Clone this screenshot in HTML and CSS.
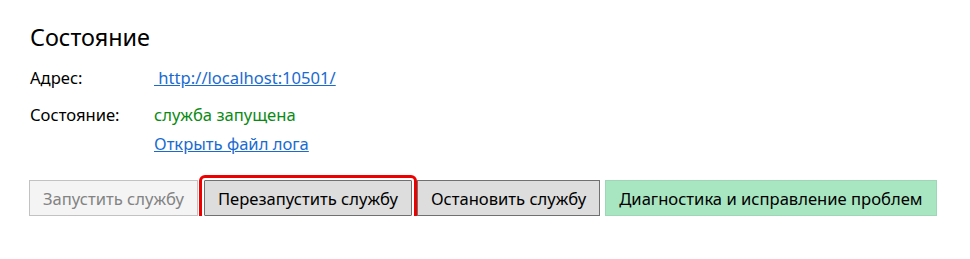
FILE: index.html
```html
<!DOCTYPE html>
<html lang="ru">
<head>
  <meta charset="UTF-8">
  <title>Состояние</title>
  <link rel="stylesheet" href="styles.css">
</head>
<body>
  <div class="panel">
    <h2 class="panel-title">Состояние</h2>
    <div class="info">
      <div class="info-label">Адрес:</div>
      <div class="info-value"><a class="link" href="#">&nbsp;http://localhost:10501/</a></div>
      <div class="info-label state-label">Состояние:</div>
      <div class="info-value state-label status-ok">служба запущена</div>
      <div></div>
      <div class="info-value log-row"><a class="link" href="#">Открыть файл лога</a></div>
    </div>
    <div class="actions">
      <button class="btn" disabled>Запустить службу</button>
      <button class="btn btn-focus">Перезапустить службу</button>
      <button class="btn">Остановить службу</button>
      <button class="btn btn-green">Диагностика и исправление проблем</button>
    </div>
  </div>
</body>
</html>
```

FILE: styles.css
```css
body {
  margin: 0;
  font-family: "Noto Sans", "Open Sans", Arial, sans-serif;
  font-size: 16.6px;
  color: #000;
  background: #fff;
}
.panel {
  padding: 21px 0 0 29px;
}
.panel-title {
  margin: 0 0 0 1px;
  font-size: 23.4px;
  font-weight: normal;
  line-height: 32px;
}
.info {
  display: grid;
  grid-template-columns: 124px auto;
  align-items: baseline;
  margin: 14px 0 0 1px;
  line-height: 22px;
}
.state-label {
  margin-top: 15px;
}
.log-row {
  margin-top: 7px;
}
.link {
  color: #1a6bd0;
  text-decoration: underline;
}
.status-ok {
  color: #0a8a14;
}
.actions {
  display: flex;
  gap: 5px;
  margin-top: 25px;
}
.btn {
  font: inherit;
  height: 36px;
  padding: 0 13px;
  background: #dddddd;
  border: 1px solid #707070;
  color: #000;
}
.btn:disabled {
  background: #f4f4f4;
  border-color: #c2c2c2;
  color: #838383;
}
.btn-focus {
  margin-left: 1px;
  outline: 3px solid #ec0000;
  outline-offset: 2px;
  border-radius: 1px;
}
.btn-green {
  background: #a8e6c2;
  border-color: #a0d6b8;
}
```
